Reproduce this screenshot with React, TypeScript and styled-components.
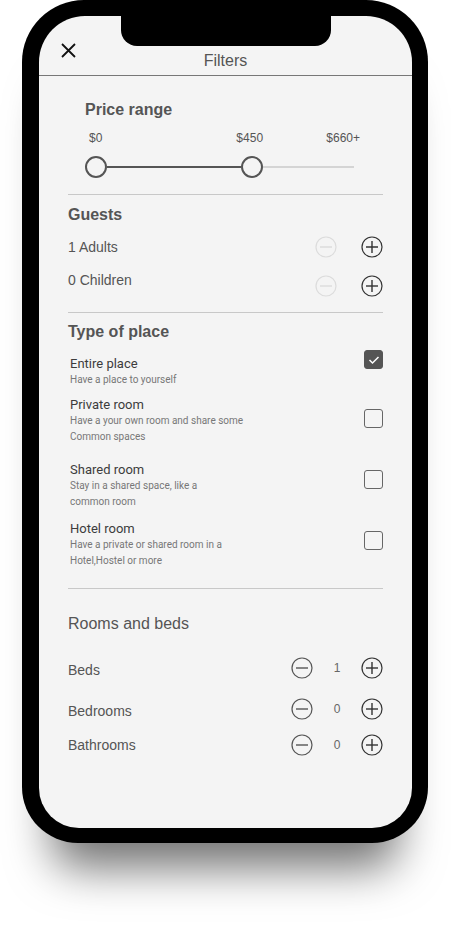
import React from 'react'
import styled, { createGlobalStyle } from 'styled-components'

const GlobalStyle = createGlobalStyle`
  html, body {
    margin: 0;
    padding: 0;
    background: #ffffff;
    font-family: 'Liberation Sans', Arial, sans-serif;
  }
`

const Page = styled.div`
  width: 451px;
  height: 927px;
  padding-left: 22px;
  box-sizing: border-box;
`

const Phone = styled.div`
  width: 406px;
  height: 843px;
  box-sizing: border-box;
  padding: 16px 16px 15px 17px;
  background: #000;
  border-radius: 62px 62px 56px 56px;
  box-shadow: 0 55px 45px -30px rgba(0, 0, 0, 0.55);
`

const Screen = styled.div`
  position: relative;
  height: 812px;
  background: #f4f4f4;
  border-radius: 46px 46px 40px 40px;
  overflow: hidden;
  display: flex;
  flex-direction: column;
`

const Notch = styled.div`
  position: absolute;
  top: 0;
  left: 82px;
  width: 210px;
  height: 30px;
  background: #000;
  border-radius: 0 0 16px 16px;
`

const Header = styled.header`
  border-bottom: 1px solid #777;
  display: grid;
  grid-template-columns: 1fr auto 1fr;
  align-items: start;
  padding: 27px 22px 0;
  box-sizing: content-box;
  height: 32px;
`

const CloseButton = styled.button`
  width: 15px;
  height: 15px;
  padding: 0;
  border: none;
  background: none;
  display: flex;
  justify-self: start;
`

const Title = styled.h1`
  margin: 9px 0 0;
  font-size: 16px;
  line-height: 18px;
  font-weight: 400;
  color: #555;
`

const Content = styled.main`
  padding: 0 29px;
  display: flex;
  flex-direction: column;
`

const Heading = styled.h2<{ $top: number; $light?: boolean; $inset?: number }>`
  margin: ${(p) => p.$top}px 0 0 ${(p) => p.$inset ?? 0}px;
  font-size: 16px;
  line-height: 18px;
  font-weight: ${(p) => (p.$light ? 400 : 700)};
  color: #555;
`

const PriceBlock = styled.div`
  margin-left: 17px;
  width: 275px;
  display: flex;
  flex-direction: column;
`

const PriceLabels = styled.div`
  margin-top: 12px;
  display: flex;
  font-size: 12px;
  line-height: 14px;
  color: #555;
  padding-left: 4px;
`

const Spacer = styled.div`
  flex: 1;
`

const Slider = styled.div`
  margin-top: 10px;
  width: 269px;
  height: 24px;
  display: flex;
  align-items: center;
`

const Thumb = styled.div`
  width: 22px;
  height: 22px;
  box-sizing: border-box;
  border: 2px solid #555;
  border-radius: 50%;
  background: #f4f4f4;
  flex-shrink: 0;
`

const Track = styled.div<{ $active?: boolean }>`
  height: 2px;
  background: ${(p) => (p.$active ? '#555' : '#d4d4d4')};
  flex: ${(p) => (p.$active ? '0 0 auto' : '1')};
`

const Divider = styled.hr<{ $top: number }>`
  margin: ${(p) => p.$top}px 0 0;
  border: none;
  height: 1px;
  background: #c8c8c8;
`

const Row = styled.div<{ $top: number }>`
  margin-top: ${(p) => p.$top}px;
  height: 22px;
  display: flex;
  align-items: center;
  justify-content: space-between;
`

const RowLabel = styled.span<{ $shift?: number }>`
  font-size: 14px;
  line-height: 20px;
  color: #555;
  transform: translateY(${(p) => p.$shift ?? 0}px);
`

const Controls = styled.div<{ $shift?: number }>`
  display: flex;
  align-items: center;
  transform: translateY(${(p) => p.$shift ?? 0}px);
`

const IconButton = styled.button<{ $gap?: number }>`
  width: 22px;
  height: 22px;
  padding: 0;
  border: none;
  background: none;
  display: flex;
  margin-left: ${(p) => p.$gap ?? 0}px;
`

const Count = styled.span`
  width: 48px;
  text-align: center;
  font-size: 12px;
  color: #666;
`

const PlaceItem = styled.div<{ $top: number }>`
  margin-top: ${(p) => p.$top}px;
  padding-left: 2px;
  display: flex;
  justify-content: space-between;
  align-items: center;
  font-family: Roboto, 'Liberation Sans', sans-serif;
`

const PlaceText = styled.div`
  display: flex;
  flex-direction: column;
`

const PlaceTitle = styled.span`
  font-size: 13px;
  line-height: 17px;
  font-weight: 400;
  color: #3c3c3c;
`

const PlaceSub = styled.span`
  font-size: 10px;
  line-height: 16px;
  color: #777;
`

const Checkbox = styled.div<{ $checked?: boolean; $shift: number }>`
  width: 19px;
  height: 19px;
  box-sizing: border-box;
  border-radius: 3px;
  border: 1.5px solid ${(p) => (p.$checked ? '#555' : '#666')};
  background: ${(p) => (p.$checked ? '#555' : 'transparent')};
  display: flex;
  align-items: center;
  justify-content: center;
  transform: translateY(${(p) => p.$shift}px);
`

const CloseIcon = () => (
  <svg width="15" height="15" viewBox="0 0 15 15">
    <path d="M1 1 L14 14 M14 1 L1 14" stroke="#111" strokeWidth="1.8" />
  </svg>
)

const CircleIcon = ({ plus, color }: { plus?: boolean; color: string }) => (
  <svg width="22" height="22" viewBox="0 0 22 22">
    <circle cx="11" cy="11" r="10" fill="none" stroke={color} strokeWidth="1.2" />
    <path d="M5 11 H17" stroke={color} strokeWidth="1.4" />
    {plus && <path d="M11 5 V17" stroke={color} strokeWidth="1.4" />}
  </svg>
)

const Stepper = ({ value, shift }: { value: number; shift?: number }) => (
  <Controls $shift={shift}>
    <IconButton>
      <CircleIcon color="#555" />
    </IconButton>
    <Count>{value}</Count>
    <IconButton>
      <CircleIcon plus color="#333" />
    </IconButton>
  </Controls>
)

const places = [
  { title: 'Entire place', lines: ['Have a place to yourself'], checked: true, top: 14, shift: -12 },
  { title: 'Private room', lines: ['Have a your own room and share some', 'Common spaces'], checked: false, top: 8, shift: -2 },
  { title: 'Shared room', lines: ['Stay in a shared space, like a', 'common room'], checked: false, top: 16, shift: -6 },
  { title: 'Hotel room', lines: ['Have a private or shared room in a', 'Hotel,Hostel or more'], checked: false, top: 10, shift: -4 },
]

const rooms = [
  { label: 'Beds', value: 1, top: 24 },
  { label: 'Bedrooms', value: 0, top: 19 },
  { label: 'Bathrooms', value: 0, top: 14 },
]

const max = 660
const price = 450
// px the active bar spans for the whole range
const scale = 196

const App: React.FC = () => {
  const activeWidth = Math.round((price / max) * scale)
  return (
    <Page>
      <GlobalStyle />
      <Phone>
        <Screen>
          <Notch />
          <Header>
            <CloseButton>
              <CloseIcon />
            </CloseButton>
            <Title>Filters</Title>
          </Header>
          <Content>
            <Heading $top={25} $inset={17}>
              Price range
            </Heading>
            <PriceBlock>
              <PriceLabels>
                <span>$0</span>
                <span style={{ marginLeft: activeWidth }}>${price}</span>
                <Spacer />
                <span>${max}+</span>
              </PriceLabels>
              <Slider>
                <Thumb />
                <Track $active style={{ width: activeWidth }} />
                <Thumb />
                <Track />
              </Slider>
            </PriceBlock>

            <Divider $top={15} />
            <Heading $top={11}>Guests</Heading>
            <Row $top={12}>
              <RowLabel>1 Adults</RowLabel>
              <Controls>
                <IconButton>
                  <CircleIcon color="#dcdcdc" />
                </IconButton>
                <IconButton $gap={24}>
                  <CircleIcon plus color="#333" />
                </IconButton>
              </Controls>
            </Row>
            <Row $top={11}>
              <RowLabel>0 Children</RowLabel>
              <Controls $shift={6}>
                <IconButton>
                  <CircleIcon color="#dcdcdc" />
                </IconButton>
                <IconButton $gap={24}>
                  <CircleIcon plus color="#333" />
                </IconButton>
              </Controls>
            </Row>

            <Divider $top={21} />
            <Heading $top={10}>Type of place</Heading>
            {places.map((p) => (
              <PlaceItem key={p.title} $top={p.top}>
                <PlaceText>
                  <PlaceTitle>{p.title}</PlaceTitle>
                  {p.lines.map((l) => (
                    <PlaceSub key={l}>{l}</PlaceSub>
                  ))}
                </PlaceText>
                <Checkbox $checked={p.checked} $shift={p.shift}>
                  {p.checked && (
                    <svg width="12" height="10" viewBox="0 0 12 10">
                      <path d="M1.5 5 L4.5 8 L10.5 2" fill="none" stroke="#fff" strokeWidth="1.5" />
                    </svg>
                  )}
                </Checkbox>
              </PlaceItem>
            ))}

            <Divider $top={19} />
            <Heading $top={26} $light>
              Rooms and beds
            </Heading>
            {rooms.map((r, i) => (
              <Row key={r.label} $top={r.top}>
                <RowLabel $shift={i < 2 ? 2 : 0}>{r.label}</RowLabel>
                <Stepper value={r.value} />
              </Row>
            ))}
          </Content>
        </Screen>
      </Phone>
    </Page>
  )
}

export default App
